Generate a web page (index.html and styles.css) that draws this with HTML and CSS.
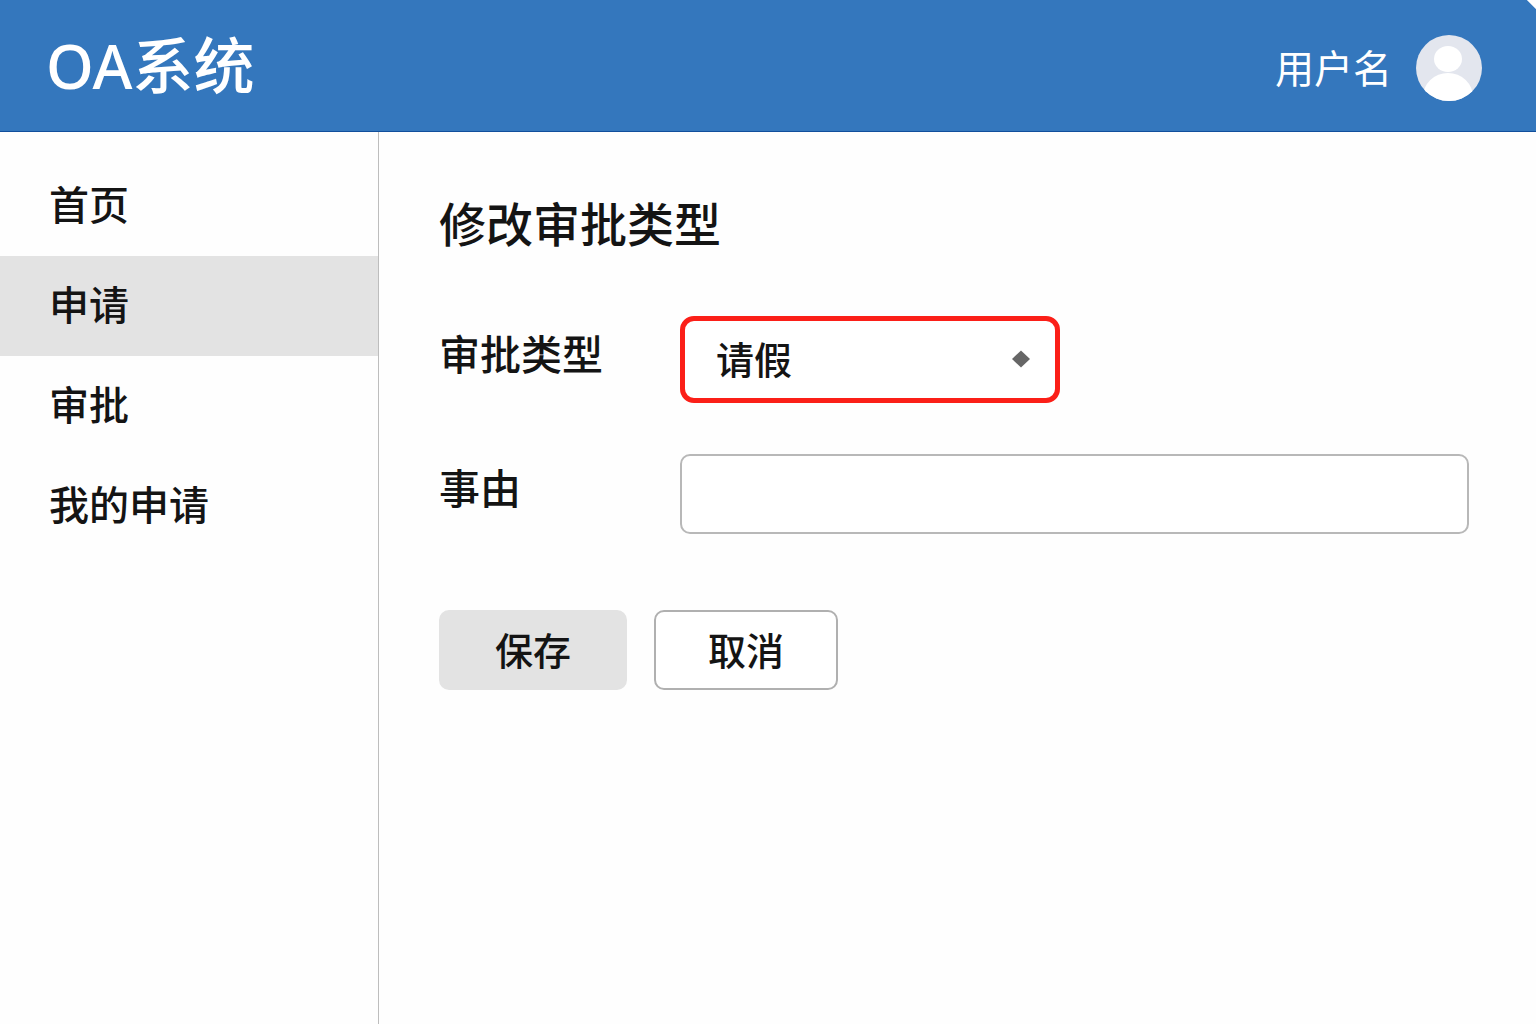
FILE: index.html
```html
<!DOCTYPE html>
<html lang="zh-CN">
<head>
    <meta charset="UTF-8">
    <meta name="viewport" content="width=device-width, initial-scale=1.0">
    <title>OA系统</title>
    <link rel="stylesheet" href="styles.css">
</head>
<body>
    <header class="topbar">
        <h1 class="brand">OA系统</h1>
        <div class="user">
            <span class="user-name">用户名</span>
            <svg class="avatar" viewBox="0 0 66 66" aria-hidden="true">
                <clipPath id="avatar-clip"><circle cx="33" cy="33" r="33"/></clipPath>
                <g clip-path="url(#avatar-clip)">
                    <rect width="66" height="66" fill="#e3e6ee"/>
                    <ellipse cx="32" cy="24" rx="14" ry="13" fill="#fff"/>
                    <ellipse cx="32" cy="62" rx="25" ry="24" fill="#fff"/>
                </g>
            </svg>
        </div>
    </header>

    <div class="layout">
        <nav class="sidebar">
            <a href="#home" class="nav-item">首页</a>
            <a href="#apply" class="nav-item active">申请</a>
            <a href="#approve" class="nav-item">审批</a>
            <a href="#mine" class="nav-item">我的申请</a>
        </nav>

        <main class="content">
            <h2 class="page-title">修改审批类型</h2>
            <form>
                <div class="form-row">
                    <label for="type">审批类型</label>
                    <div class="select-box">
                        <select id="type">
                            <option selected>请假</option>
                        </select>
                        <svg class="select-icon" viewBox="0 0 18 18" aria-hidden="true">
                            <path d="M9 0.5L18 9L9 17.5L0 9Z" fill="#666"/>
                        </svg>
                    </div>
                </div>
                <div class="form-row">
                    <label for="reason">事由</label>
                    <input type="text" id="reason" class="text-input">
                </div>
                <div class="actions">
                    <button type="submit" class="btn btn-save">保存</button>
                    <button type="button" class="btn btn-cancel">取消</button>
                </div>
            </form>
        </main>
    </div>
</body>
</html>
```
FILE: styles.css
```css
* {
    box-sizing: border-box;
}

body {
    margin: 0;
    min-height: 100vh;
    display: flex;
    flex-direction: column;
    font-family: "Noto Sans CJK SC", sans-serif;
    font-weight: 500;
    color: #141414;
    background: #fefefe;
}

/* Header */
.topbar {
    display: flex;
    align-items: center;
    justify-content: space-between;
    height: 132px;
    padding: 4px 54px 0 46px;
    color: #fff;
    background: linear-gradient(225deg, #fefefe 6px, #3477bd 7px);
    border-bottom: 1px solid #114f9c;
}

.brand {
    margin: 0;
    padding-bottom: 4px;
    font-family: "Noto Sans", "Noto Sans CJK SC", sans-serif;
    font-size: 61px;
    font-weight: 500;
    line-height: 80px;
}

.user {
    display: flex;
    align-items: center;
    gap: 24px;
}

.user-name {
    padding-bottom: 4px;
    font-size: 39px;
    font-weight: 400;
    line-height: 60px;
}

.avatar {
    width: 66px;
    height: 66px;
}

/* Layout */
.layout {
    flex: 1;
    display: flex;
}

.sidebar {
    width: 379px;
    flex-shrink: 0;
    padding-top: 24px;
    border-right: 1px solid #bdbdbd;
}

.nav-item {
    display: block;
    padding: 0 0 6px 49px;
    font-size: 40px;
    line-height: 94px;
    color: inherit;
    text-decoration: none;
}

.nav-item.active {
    background: #e3e3e3;
}

.content {
    flex: 1;
    padding: 56px 67px 60px 60px;
}

.page-title {
    margin: 0 0 60px;
    font-size: 47px;
    font-weight: 500;
    line-height: 68px;
}

/* Form */
.form-row {
    display: flex;
    align-items: center;
    margin-bottom: 51px;
}

.form-row label {
    width: 241px;
    flex-shrink: 0;
    padding-bottom: 16px;
    font-size: 41px;
    line-height: 60px;
}

.select-box {
    position: relative;
    width: 380px;
}

.select-box select {
    width: 100%;
    height: 87px;
    padding: 0 60px 4px 31px;
    font: inherit;
    font-size: 38px;
    color: inherit;
    background: #fff;
    border: 5px solid #fb1f18;
    border-radius: 14px;
    appearance: none;
}

.select-icon {
    position: absolute;
    top: 34px;
    right: 30px;
    width: 18px;
    height: 18px;
    pointer-events: none;
}

.text-input {
    flex: 1;
    min-width: 0;
    height: 80px;
    padding: 0 30px;
    font: inherit;
    font-size: 38px;
    color: inherit;
    background: #fff;
    border: 2px solid #b8b8b8;
    border-radius: 10px;
}

.actions {
    display: flex;
    gap: 27px;
    padding-top: 25px;
}

.btn {
    height: 80px;
    padding: 0 52px 4px;
    font: inherit;
    font-size: 38px;
    color: inherit;
    border: 2px solid #b0b0b0;
    border-radius: 10px;
    cursor: pointer;
}

.btn-save {
    padding: 0 54px 4px;
    background: #e3e3e3;
    border-color: #e3e3e3;
}

.btn-cancel {
    padding: 0 52px 4px;
    background: #fff;
}
```
